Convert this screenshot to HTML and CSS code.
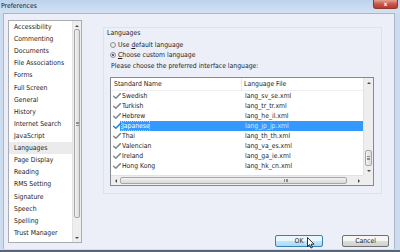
FILE: index.html
```html
<!DOCTYPE html>
<html>
<head>
<meta charset="utf-8">
<title>Preferences</title>
<link rel="stylesheet" href="styles.css">
</head>
<body>
<div class="window">
  <div class="titlebar">
    <span class="title">Preferences</span>
    <span class="close">x</span>
  </div>
  <div class="frame">
    <div class="client">
      <div class="sidebar">
        <ul class="catlist">
          <li>Accessibility</li>
          <li>Commenting</li>
          <li>Documents</li>
          <li>File Associations</li>
          <li>Forms</li>
          <li>Full Screen</li>
          <li>General</li>
          <li>History</li>
          <li>Internet Search</li>
          <li>JavaScript</li>
          <li class="sel">Languages</li>
          <li>Page Display</li>
          <li>Reading</li>
          <li>RMS Setting</li>
          <li>Signature</li>
          <li>Speech</li>
          <li>Spelling</li>
          <li>Trust Manager</li>
        </ul>
        <div class="vscroll side">
          <span class="sbtn"><span class="tri up"></span></span>
          <span class="vtrack"><span class="vthumb long"><span class="grip"></span></span></span>
          <span class="sbtn"><span class="tri down"></span></span>
        </div>
      </div>
      <div class="main">
        <div class="group">
          <div class="glabel">Languages</div>
          <label class="radio"><span class="rdot"></span><span class="rtext">Use <u>d</u>efault language</span></label>
          <label class="radio"><span class="rdot on"></span><span class="rtext"><u>C</u>hoose custom language</span></label>
          <div class="hint">Please choose the preferred interface language:</div>
          <div class="listview">
            <div class="lvbody">
              <div class="lvhead">
                <span class="c1">Standard Name</span>
                <span class="c2">Language File</span>
              </div>
              <div class="row"><span class="c1"><svg class="chk" viewBox="0 0 8 6"><path d="M0.6 3.2 L2.8 5.2 L7.4 0.6"/></svg><span class="nm">Swedish</span></span><span class="c2">lang_sv_se.xml</span></div>
              <div class="row"><span class="c1"><svg class="chk" viewBox="0 0 8 6"><path d="M0.6 3.2 L2.8 5.2 L7.4 0.6"/></svg><span class="nm">Turkish</span></span><span class="c2">lang_tr_tr.xml</span></div>
              <div class="row"><span class="c1"><svg class="chk" viewBox="0 0 8 6"><path d="M0.6 3.2 L2.8 5.2 L7.4 0.6"/></svg><span class="nm">Hebrew</span></span><span class="c2">lang_he_il.xml</span></div>
              <div class="row selrow"><span class="c1"><svg class="chk" viewBox="0 0 8 6"><path d="M0.6 3.2 L2.8 5.2 L7.4 0.6"/></svg><span class="nm">Japanese</span></span><span class="c2">lang_jp_jp.xml</span></div>
              <div class="row"><span class="c1"><svg class="chk" viewBox="0 0 8 6"><path d="M0.6 3.2 L2.8 5.2 L7.4 0.6"/></svg><span class="nm">Thai</span></span><span class="c2">lang_th_th.xml</span></div>
              <div class="row"><span class="c1"><svg class="chk" viewBox="0 0 8 6"><path d="M0.6 3.2 L2.8 5.2 L7.4 0.6"/></svg><span class="nm">Valencian</span></span><span class="c2">lang_va_es.xml</span></div>
              <div class="row"><span class="c1"><svg class="chk" viewBox="0 0 8 6"><path d="M0.6 3.2 L2.8 5.2 L7.4 0.6"/></svg><span class="nm">Ireland</span></span><span class="c2">lang_ga_ie.xml</span></div>
              <div class="row"><span class="c1"><svg class="chk" viewBox="0 0 8 6"><path d="M0.6 3.2 L2.8 5.2 L7.4 0.6"/></svg><span class="nm">Hong Kong</span></span><span class="c2">lang_hk_cn.xml</span></div>
            </div>
            <div class="vscroll lv">
              <span class="sbtn"><span class="tri up"></span></span>
              <span class="vtrack end"><span class="vthumb short"><span class="grip"></span></span></span>
              <span class="sbtn"><span class="tri down"></span></span>
            </div>
            <div class="hscroll">
              <span class="hbtn"><span class="tri left"></span></span>
              <span class="hthumb"><span class="hgrip"></span></span>
              <span class="htrack"></span>
              <span class="hbtn"><span class="tri right"></span></span>
            </div>
            <div class="corner"></div>
          </div>
        </div>
        <div class="buttons">
          <button class="btn ok">OK</button>
          <button class="btn">Cancel</button>
        </div>
      </div>
    </div>
  </div>
  <svg class="cursor" viewBox="0 0 8 12"><path d="M0.5 0.5 L0.5 9.5 L2.6 7.6 L4 11 L5.4 10.4 L4.1 7.2 L7 7.2 Z"/></svg>
</div>
</body>
</html>
```
FILE: styles.css
```css
* { box-sizing: border-box; }
html, body { margin: 0; padding: 0; }
body {
  width: 400px;
  height: 252px;
  overflow: hidden;
  background: #56657a;
  font-family: "DejaVu Sans Condensed", "Liberation Sans", sans-serif;
  font-size: 6.8px;
  color: #1c1c1c;
}
.window {
  position: relative;
  height: 250px;
  display: flex;
  flex-direction: column;
  background: #cddcee;
}
.titlebar {
  height: 13px;
  display: flex;
  align-items: flex-start;
  background: linear-gradient(#bcd2ec, #d3e2f3);
}
.title {
  margin: 2px 0 0 1px;
  font-size: 6.8px;
  line-height: 8px;
  color: #1a1a1a;
}
.close {
  margin-left: auto;
  margin-right: 2px;
  width: 25px;
  height: 9px;
  border: 1px solid #8a3a33;
  border-top: none;
  border-radius: 0 0 3px 3px;
  background: linear-gradient(#e4a293, #c9574a 50%, #b73a2c);
  color: #fff;
  font-weight: bold;
  font-size: 6px;
  line-height: 8px;
  text-align: center;
}
.frame {
  flex: 1;
  display: flex;
  padding: 0 5px 1px 3px;
}
.client {
  flex: 1;
  display: flex;
  border: 1px solid #a7b6c9;
  border-bottom: none;
  background: #eceff8;
  padding: 6px 5px 2px 4px;
}
.sidebar {
  width: 74px;
  height: 223px;
  border: 1px solid #a9adb3;
  background: #fff;
  display: flex;
}
.catlist {
  list-style: none;
  margin: 0;
  padding: 0;
  flex: 1;
  overflow: hidden;
}
.catlist li {
  height: 12.12px;
  line-height: 12.12px;
  padding-left: 5px;
  white-space: nowrap;
  overflow: hidden;
}
.catlist li.sel { background: #ebebeb; }
.vscroll {
  display: flex;
  flex-direction: column;
  background: #eeeeee;
  border-left: 1px solid #e2e2e2;
}
.vscroll.side { width: 9px; }
.vscroll.lv { width: 10px; }
.sbtn {
  height: 9px;
  display: flex;
  align-items: center;
  justify-content: center;
}
.vtrack {
  flex: 1;
  display: flex;
  flex-direction: column;
  padding: 0 1px;
}
.vtrack.end { justify-content: flex-end; }
.vthumb {
  display: flex;
  align-items: center;
  justify-content: center;
  border: 1px solid #a7a7a7;
  border-radius: 2px;
  background: linear-gradient(90deg, #f2f2f2, #dcdcdc);
}
.vthumb.long { height: 189px; margin-top: -1px; }
.vthumb.short { height: 16px; }
.grip {
  width: 3px;
  height: 4px;
  border-top: 1px solid #8d8d8d;
  border-bottom: 1px solid #8d8d8d;
  background: linear-gradient(#8d8d8d, #8d8d8d) center / 3px 1px no-repeat;
}
.tri {
  width: 0;
  height: 0;
  border: 2px solid transparent;
}
.tri.up { border-bottom-color: #4d4d4d; border-top-width: 0; }
.tri.down { border-top-color: #4d4d4d; border-bottom-width: 0; }
.tri.left { border-right-color: #4d4d4d; border-left-width: 0; }
.tri.right { border-left-color: #4d4d4d; border-right-width: 0; }
.main {
  margin-left: 21px;
  flex: 1;
  display: flex;
  flex-direction: column;
}
.group {
  width: 279px;
  height: 167px;
  margin-top: 7px;
  border: 1px solid #dde2ec;
  padding: 1px 0 0 3px;
}
.glabel { line-height: 9px; }
.radio {
  display: flex;
  align-items: center;
  height: 10px;
  padding-left: 3px;
}
.radio:first-of-type { margin-top: 2px; }
.rtext { white-space: pre; }
.rdot {
  width: 6px;
  height: 6px;
  border: 1px solid #8e9297;
  border-radius: 50%;
  background: radial-gradient(#f4f4f4, #d8dadd);
  margin-right: 2px;
  display: flex;
  align-items: center;
  justify-content: center;
}
.rdot.on::after {
  content: "";
  width: 2.5px;
  height: 2.5px;
  border-radius: 50%;
  background: #1e3f73;
}
.hint {
  height: 10px;
  line-height: 10px;
  margin-top: 1px;
  padding-left: 4px;
}
.listview {
  margin: 6px 0 0 3px;
  width: 264px;
  height: 109px;
  border: 1px solid #838a93;
  background: #fff;
  display: grid;
  grid-template-columns: 1fr 10px;
  grid-template-rows: 1fr 10px;
}
.lvbody { overflow: hidden; }
.lvhead {
  height: 13px;
  display: flex;
  align-items: center;
  background: #fff;
  border-bottom: 1px solid #eef0f3;
}
.lvhead .c1 {
  width: 131px;
  padding-left: 3px;
  border-right: 1px solid #e5e8ec;
  height: 13px;
  line-height: 13px;
}
.lvhead .c2 { padding-left: 2px; }
.row {
  height: 10px;
  display: flex;
  align-items: center;
  white-space: nowrap;
}
.row .c1 {
  width: 131px;
  display: flex;
  align-items: center;
  padding-left: 2px;
}
.row .c2 { padding-left: 3px; }
.chk {
  width: 8px;
  height: 6px;
  fill: none;
  stroke: #7c8a8e;
  stroke-width: 1.5;
  stroke-linecap: round;
  stroke-linejoin: round;
  margin-right: 1px;
}
.row .nm { line-height: 10px; }
.selrow { background: linear-gradient(90deg, transparent 9px, #3399ff 9px); }
.selrow .chk { stroke: #2e7fd6; }
.selrow .nm {
  color: #fff;
  outline: 1px dotted #9fd0ff;
  outline-offset: -1px;
  padding-left: 1px;
  margin-left: -1px;
}
.selrow .c2 { color: #d8ebff; }
.hscroll {
  display: flex;
  align-items: stretch;
  background: #eeeeee;
  border-top: 1px solid #e2e2e2;
}
.hbtn {
  width: 9px;
  display: flex;
  align-items: center;
  justify-content: center;
}
.hthumb {
  width: 227px;
  margin: 1px 0;
  border: 1px solid #a7a7a7;
  border-radius: 2px;
  background: linear-gradient(#f2f2f2, #d9d9d9);
  display: flex;
  align-items: center;
  justify-content: flex-end;
  padding-right: 58px;
}
.hgrip {
  width: 4px;
  height: 3px;
  border-left: 1px solid #8d8d8d;
  border-right: 1px solid #8d8d8d;
  background: linear-gradient(#8d8d8d, #8d8d8d) center / 1px 3px no-repeat;
}
.htrack { flex: 1; }
.corner { background: #eeeeee; }
.buttons {
  margin-top: auto;
  display: flex;
  justify-content: flex-end;
  gap: 19px;
  padding-right: 0;
}
.btn {
  font: inherit;
  color: #1c1c1c;
  height: 12px;
  width: 47px;
  padding: 0;
  line-height: 10px;
  border: 1px solid #707070;
  border-radius: 2px;
  background: linear-gradient(#f6f6f6 45%, #dddddd 55%, #cfcfcf);
}
.btn.ok {
  width: 48px;
  border-color: #3c7fb1;
  background: linear-gradient(#eaf6fd 45%, #bee6fd 55%, #a7d9f5);
}
.cursor {
  position: absolute;
  left: 307px;
  top: 237px;
  width: 8px;
  height: 12px;
  fill: #fff;
  stroke: #000;
  stroke-width: 0.8;
}
```
